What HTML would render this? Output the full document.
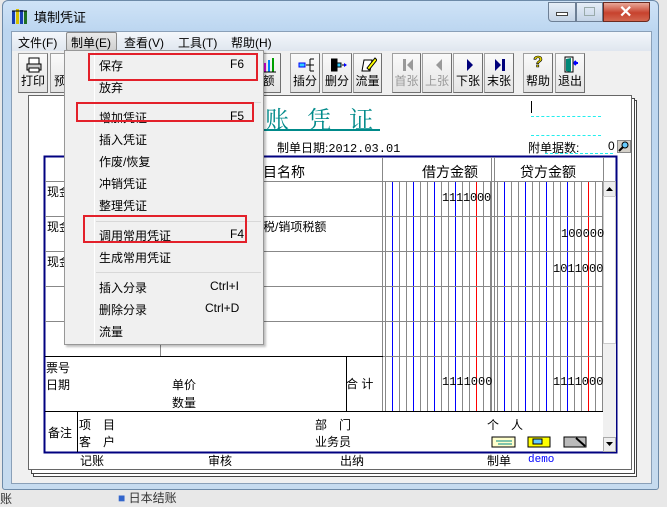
<!DOCTYPE html>
<html><head><meta charset="utf-8"><style>
*{margin:0;padding:0;box-sizing:border-box}
body{width:667px;height:503px;overflow:hidden;background:#e8e8e8;position:relative;font-family:"Liberation Sans","Noto Sans CJK SC",sans-serif;font-size:12px;color:#000}
.a{position:absolute;white-space:nowrap}
.win{left:2px;top:0;width:657px;height:490px;background:linear-gradient(#cfe3f7,#bcd6f0 30px,#c6dbef);border:1px solid #6d8aa8;border-radius:6px 6px 3px 3px}
.client{left:11px;top:31px;width:641px;height:453px;background:#f0f0f0;border:1px solid #8aa0b8}
.menubar{left:12px;top:32px;width:639px;height:19px;background:linear-gradient(#f4f7fb,#dfe6ef)}
.mi{top:34px;font-size:12px}
.tb{top:53px;height:40px;background:linear-gradient(#fafafa,#e4e4e4);border:1px solid #a0a0a0;border-right-color:#707070;border-bottom-color:#707070;text-align:center;font-size:12px}
.tb span{position:absolute;left:0;right:0;bottom:3px}
.paper{left:28px;top:95px;width:604px;height:375px;background:#fff;border:1px solid #666}
.menu{left:64px;top:50px;width:200px;height:295px;background:#f0f0f0;border:1px solid #979797;box-shadow:2px 2px 2px rgba(0,0,0,.25)}
.mt{left:99px;font-size:12px}
.sc{font-size:12px}
.red{border:2px solid #e3202a}
</style></head><body>
<div class="a win"></div>
<!-- title -->
<svg class="a" style="left:11px;top:8px" width="18" height="17"><rect x="1" y="3" width="3" height="13" fill="#1a3fb0"/><rect x="5" y="1" width="3" height="15" fill="#d8c000"/><rect x="9" y="2" width="3" height="14" fill="#1a3fb0"/><rect x="13" y="3" width="3" height="13" fill="#207020"/><path d="M1 3h15" stroke="#000"/></svg>
<div class="a" style="left:34px;top:7px;font-size:13px">填制凭证</div>
<div class="a" style="left:548px;top:2px;width:28px;height:20px;border:1px solid #6d7f95;border-radius:0 0 0 4px;background:linear-gradient(#e6eef7,#c3d3e6)"></div>
<div class="a" style="left:556px;top:12px;width:12px;height:4px;background:#fff;border:1px solid #444"></div>
<div class="a" style="left:576px;top:2px;width:27px;height:20px;border:1px solid #6d7f95;background:linear-gradient(#e6eef7,#c3d3e6)"></div>
<div class="a" style="left:584px;top:7px;width:11px;height:9px;border:1px solid #9aa"></div>
<div class="a" style="left:603px;top:2px;width:47px;height:20px;border:1px solid #6b2a20;border-radius:0 0 4px 0;background:linear-gradient(#e9a898,#c7422e 55%,#d2664f)"></div>
<div class="a" style="left:619px;top:2px;color:#fff;font-weight:bold;font-size:16px">✕</div>
<div class="a client"></div>
<div class="a menubar"></div>
<div class="a mi" style="left:18px">文件(F)</div>
<div class="a" style="left:66px;top:32px;width:51px;height:19px;border:1px solid #8a8a8a;border-radius:2px;background:linear-gradient(#eaeaea,#d0d0d0)"></div>
<div class="a mi" style="left:71px">制单(E)</div>
<div class="a mi" style="left:124px">查看(V)</div>
<div class="a mi" style="left:178px">工具(T)</div>
<div class="a mi" style="left:231px">帮助(H)</div>
<!-- toolbar -->
<div class="a tb" style="left:18px;width:30px"><svg class="a" style="left:7px;top:3px" width="16" height="16"><rect x="3" y="1" width="10" height="6" fill="#fff" stroke="#000"/><rect x="1" y="7" width="14" height="6" fill="#ccc" stroke="#000"/><rect x="3" y="11" width="10" height="4" fill="#fff" stroke="#000"/></svg><span>打印</span></div>
<div class="a tb" style="left:50px;width:20px"><span style="text-align:left;left:3px">预</span></div>
<div class="a tb" style="left:256px;width:25px"><svg class="a" style="left:4px;top:3px" width="16" height="16"><rect x="3" y="6" width="2" height="9" fill="#e000e0"/><rect x="7" y="3" width="2" height="12" fill="#0080ff"/><rect x="11" y="1" width="2" height="14" fill="#00a000"/><path d="M1 15h14" stroke="#000"/></svg><span>额</span></div>
<div class="a tb" style="left:290px;width:30px"><svg class="a" style="left:7px;top:3px" width="18" height="16"><rect x="1" y="6" width="6" height="4" fill="#3cf" stroke="#00f"/><path d="M8 8h4M12 2h4M12 8h4M12 14h4M12 2v12" stroke="#000"/></svg><span>插分</span></div>
<div class="a tb" style="left:322px;width:30px"><svg class="a" style="left:7px;top:3px" width="18" height="16"><rect x="3" y="6" width="8" height="4" fill="#3cf" stroke="#000"/><path d="M1 2h6v12H1M12 8h4" stroke="#000"/><path d="M14 6l3 2-3 2z" fill="#00f"/></svg><span>删分</span></div>
<div class="a tb" style="left:353px;width:29px"><svg class="a" style="left:7px;top:2px" width="16" height="17"><path d="M3 4h8l-2 11H1z" fill="#fff" stroke="#000"/><path d="M6 12l8-10 2 2-8 10z" fill="#ff0" stroke="#000"/></svg><span>流量</span></div>
<div class="a tb" style="left:392px;width:29px;color:#999"><svg class="a" style="left:9px;top:4px" width="12" height="14"><rect x="1" y="1" width="3" height="12" fill="#999"/><path d="M11 1v12L5 7z" fill="#999"/></svg><span>首张</span></div>
<div class="a tb" style="left:422px;width:30px;color:#999"><svg class="a" style="left:10px;top:4px" width="12" height="14"><path d="M9 1v12L3 7z" fill="#999"/></svg><span>上张</span></div>
<div class="a tb" style="left:453px;width:30px"><svg class="a" style="left:10px;top:4px" width="12" height="14"><path d="M3 1v12l6-6z" fill="#00007a"/></svg><span>下张</span></div>
<div class="a tb" style="left:484px;width:30px"><svg class="a" style="left:9px;top:4px" width="12" height="14"><path d="M1 1v12l6-6z" fill="#00007a"/><rect x="8" y="1" width="3" height="12" fill="#00007a"/></svg><span>末张</span></div>
<div class="a tb" style="left:523px;width:30px"><div class="a" style="left:0;right:0;top:0;color:#e0d000;font-weight:bold;font-size:16px;-webkit-text-stroke:.6px #000">?</div><span>帮助</span></div>
<div class="a tb" style="left:555px;width:30px"><svg class="a" style="left:7px;top:2px" width="18" height="17"><rect x="2" y="1" width="8" height="15" fill="#fff" stroke="#000"/><path d="M3 3l5-1v14l-5-1z" fill="#087"/><path d="M11 7h4M11 7l2-2M11 7l2 2" stroke="#00f" stroke-width="2"/></svg><span>退出</span></div>
<!-- paper with stacked edges -->
<div class="a" style="left:33px;top:100px;width:604px;height:377px;border:1px solid #444;background:#fff"></div>
<div class="a" style="left:31px;top:98px;width:604px;height:376px;border:1px solid #444;background:#fff"></div>
<div class="a paper"></div>
<div class="a" style="left:265px;top:100px;font-family:'Noto Serif CJK SC',serif;font-size:24px;color:#008a8a;letter-spacing:6px">账 凭 证</div>
<div class="a" style="left:235px;top:129px;width:145px;height:2px;background:#008a8a"></div>
<div class="a" style="left:531px;top:101px;width:1px;height:12px;background:#000"></div>
<div class="a" style="left:531px;top:116px;width:70px;border-top:1px dashed #2ee"></div>
<div class="a" style="left:531px;top:135px;width:70px;border-top:1px dashed #2ee"></div>
<div class="a" style="left:277px;top:139px">制单日期:<span style="font-family:'Liberation Mono',monospace">2012.03.01</span></div>
<div class="a" style="left:528px;top:139px">附单据数:</div>
<div class="a" style="left:545px;top:153px;width:68px;border-top:1px dashed #2ee"></div>
<div class="a" style="left:608px;top:139px">0</div>
<div class="a" style="left:617px;top:140px;width:14px;height:13px;background:#d4d0c8;border:1px solid #888"></div>
<svg class="a" style="left:618px;top:141px" width="12" height="11"><circle cx="7" cy="4" r="3" fill="#6cf" stroke="#000"/><path d="M5 6l-4 4" stroke="#000" stroke-width="2"/></svg>
<!-- table -->
<svg class="a" style="left:0;top:0" width="667" height="503">
<defs>
<pattern id="g1" x="385" y="0" width="21" height="10" patternUnits="userSpaceOnUse"><rect x="0" width="1" height="10" fill="#888"/><rect x="7" width="1" height="10" fill="#00f"/><rect x="14" width="1" height="10" fill="#888"/></pattern>
<pattern id="g2" x="497" y="0" width="21" height="10" patternUnits="userSpaceOnUse"><rect x="0" width="1" height="10" fill="#888"/><rect x="7" width="1" height="10" fill="#00f"/><rect x="14" width="1" height="10" fill="#888"/></pattern>
</defs>
<rect x="44.5" y="156.5" width="572" height="296" fill="#fff" stroke="#000080" stroke-width="2"/>
<rect x="385" y="181" width="106" height="230" fill="url(#g1)"/>
<rect x="497" y="181" width="106" height="230" fill="url(#g2)"/>
<rect x="476" y="181" width="1" height="230" fill="#f00"/>
<rect x="588" y="181" width="1" height="230" fill="#f00"/>
<g stroke="#888" fill="none">
<path d="M160.5 157v199M382.5 157v254M491.5 157v254M494.5 157v254M603.5 157v254"/>
<path d="M45 181.5h558M45 216.5h558M45 251.5h558M45 286.5h558M45 321.5h558M382 356.5h221M494 356.5h109"/>
</g>
<path d="M45 356.5h338M45 411.5h558M346.5 356v55M77.5 411v41" stroke="#000"/>
<rect x="603" y="181" width="13" height="271" fill="#f0f0f0"/>
<rect x="603.5" y="181.5" width="12" height="15" fill="#eee" stroke="#aaa"/>
<path d="M606 191h7l-3.5-4z" fill="#000"/>
<rect x="603.5" y="196.5" width="12" height="147" fill="#fff" stroke="#ccc"/>
<rect x="603.5" y="437.5" width="12" height="14" fill="#eee" stroke="#aaa"/>
<path d="M606 442h7l-3.5 4z" fill="#000"/>
<rect x="492" y="437" width="23" height="10" fill="#ffc" stroke="#000"/><path d="M496 441h16M498 444h14" stroke="#088"/>
<rect x="528" y="437" width="22" height="10" fill="#ff0" stroke="#000"/><rect x="533" y="439" width="9" height="5" fill="#6cf" stroke="#000"/>
<rect x="564" y="437" width="22" height="10" fill="#bbb" stroke="#000"/><path d="M576 438l9 8" stroke="#000" stroke-width="2"/>
</svg>
<div class="a" style="left:422px;top:162px;font-size:14px;color:#000">借方金额</div>
<div class="a" style="left:520px;top:162px;font-size:14px">贷方金额</div>
<div class="a" style="left:263px;top:162px;font-size:14px">目名称</div>
<div class="a" style="left:47px;top:183px">现金</div>
<div class="a" style="left:47px;top:218px">现金</div>
<div class="a" style="left:263px;top:218px">税/销项税额</div>
<div class="a" style="left:47px;top:253px">现金</div>
<div class="a" style="left:442px;top:191px;font-family:'Liberation Mono',monospace;letter-spacing:-.2px">1111000</div>
<div class="a" style="left:561px;top:227px;font-family:'Liberation Mono',monospace">100000</div>
<div class="a" style="left:553px;top:262px;font-family:'Liberation Mono',monospace">1011000</div>
<div class="a" style="left:442px;top:375px;font-family:'Liberation Mono',monospace">1111000</div>
<div class="a" style="left:553px;top:375px;font-family:'Liberation Mono',monospace">1111000</div>
<div class="a" style="left:46px;top:359px">票号</div>
<div class="a" style="left:46px;top:376px">日期</div>
<div class="a" style="left:172px;top:376px">单价</div>
<div class="a" style="left:172px;top:394px">数量</div>
<div class="a" style="left:346px;top:375px">合 计</div>
<div class="a" style="left:48px;top:424px">备注</div>
<div class="a" style="left:79px;top:416px">项　目</div>
<div class="a" style="left:79px;top:433px">客　户</div>
<div class="a" style="left:315px;top:416px">部　门</div>
<div class="a" style="left:315px;top:433px">业务员</div>
<div class="a" style="left:487px;top:416px">个　人</div>
<div class="a" style="left:80px;top:452px">记账</div>
<div class="a" style="left:208px;top:452px">审核</div>
<div class="a" style="left:340px;top:452px">出纳</div>
<div class="a" style="left:487px;top:452px">制单</div>
<div class="a" style="left:528px;top:454px;color:#00f;font-family:'Liberation Mono',monospace;font-size:11px">demo</div>
<div class="a" style="left:0;top:490px;font-size:12px;color:#333">账</div>
<div class="a" style="left:118px;top:489px;font-size:12px;color:#333"><span style="color:#36c">■</span> 日本结账</div>
<!-- dropdown menu -->
<div class="a menu"></div>
<div class="a" style="left:94px;top:51px;width:1px;height:293px;background:#e0e0e0;border-right:1px solid #fff"></div>
<div class="a" style="left:96px;top:102px;width:165px;height:1px;background:#d8d8d8"></div>
<div class="a" style="left:96px;top:221px;width:165px;height:1px;background:#d8d8d8"></div>
<div class="a" style="left:96px;top:272px;width:165px;height:1px;background:#d8d8d8"></div>
<div class="a mt" style="top:57px">保存</div><div class="a sc" style="left:230px;top:57px">F6</div>
<div class="a mt" style="top:79px">放弃</div>
<div class="a mt" style="top:109px">增加凭证</div><div class="a sc" style="left:230px;top:109px">F5</div>
<div class="a mt" style="top:131px">插入凭证</div>
<div class="a mt" style="top:153px">作废/恢复</div>
<div class="a mt" style="top:175px">冲销凭证</div>
<div class="a mt" style="top:197px">整理凭证</div>
<div class="a mt" style="top:227px">调用常用凭证</div><div class="a sc" style="left:230px;top:227px">F4</div>
<div class="a mt" style="top:249px">生成常用凭证</div>
<div class="a mt" style="top:279px">插入分录</div><div class="a sc" style="left:210px;top:279px">Ctrl+I</div>
<div class="a mt" style="top:301px">删除分录</div><div class="a sc" style="left:205px;top:301px">Ctrl+D</div>
<div class="a mt" style="top:323px">流量</div>
<div class="a red" style="left:88px;top:53px;width:170px;height:28px"></div>
<div class="a red" style="left:76px;top:102px;width:178px;height:20px"></div>
<div class="a red" style="left:83px;top:215px;width:164px;height:28px"></div>
</body></html>
